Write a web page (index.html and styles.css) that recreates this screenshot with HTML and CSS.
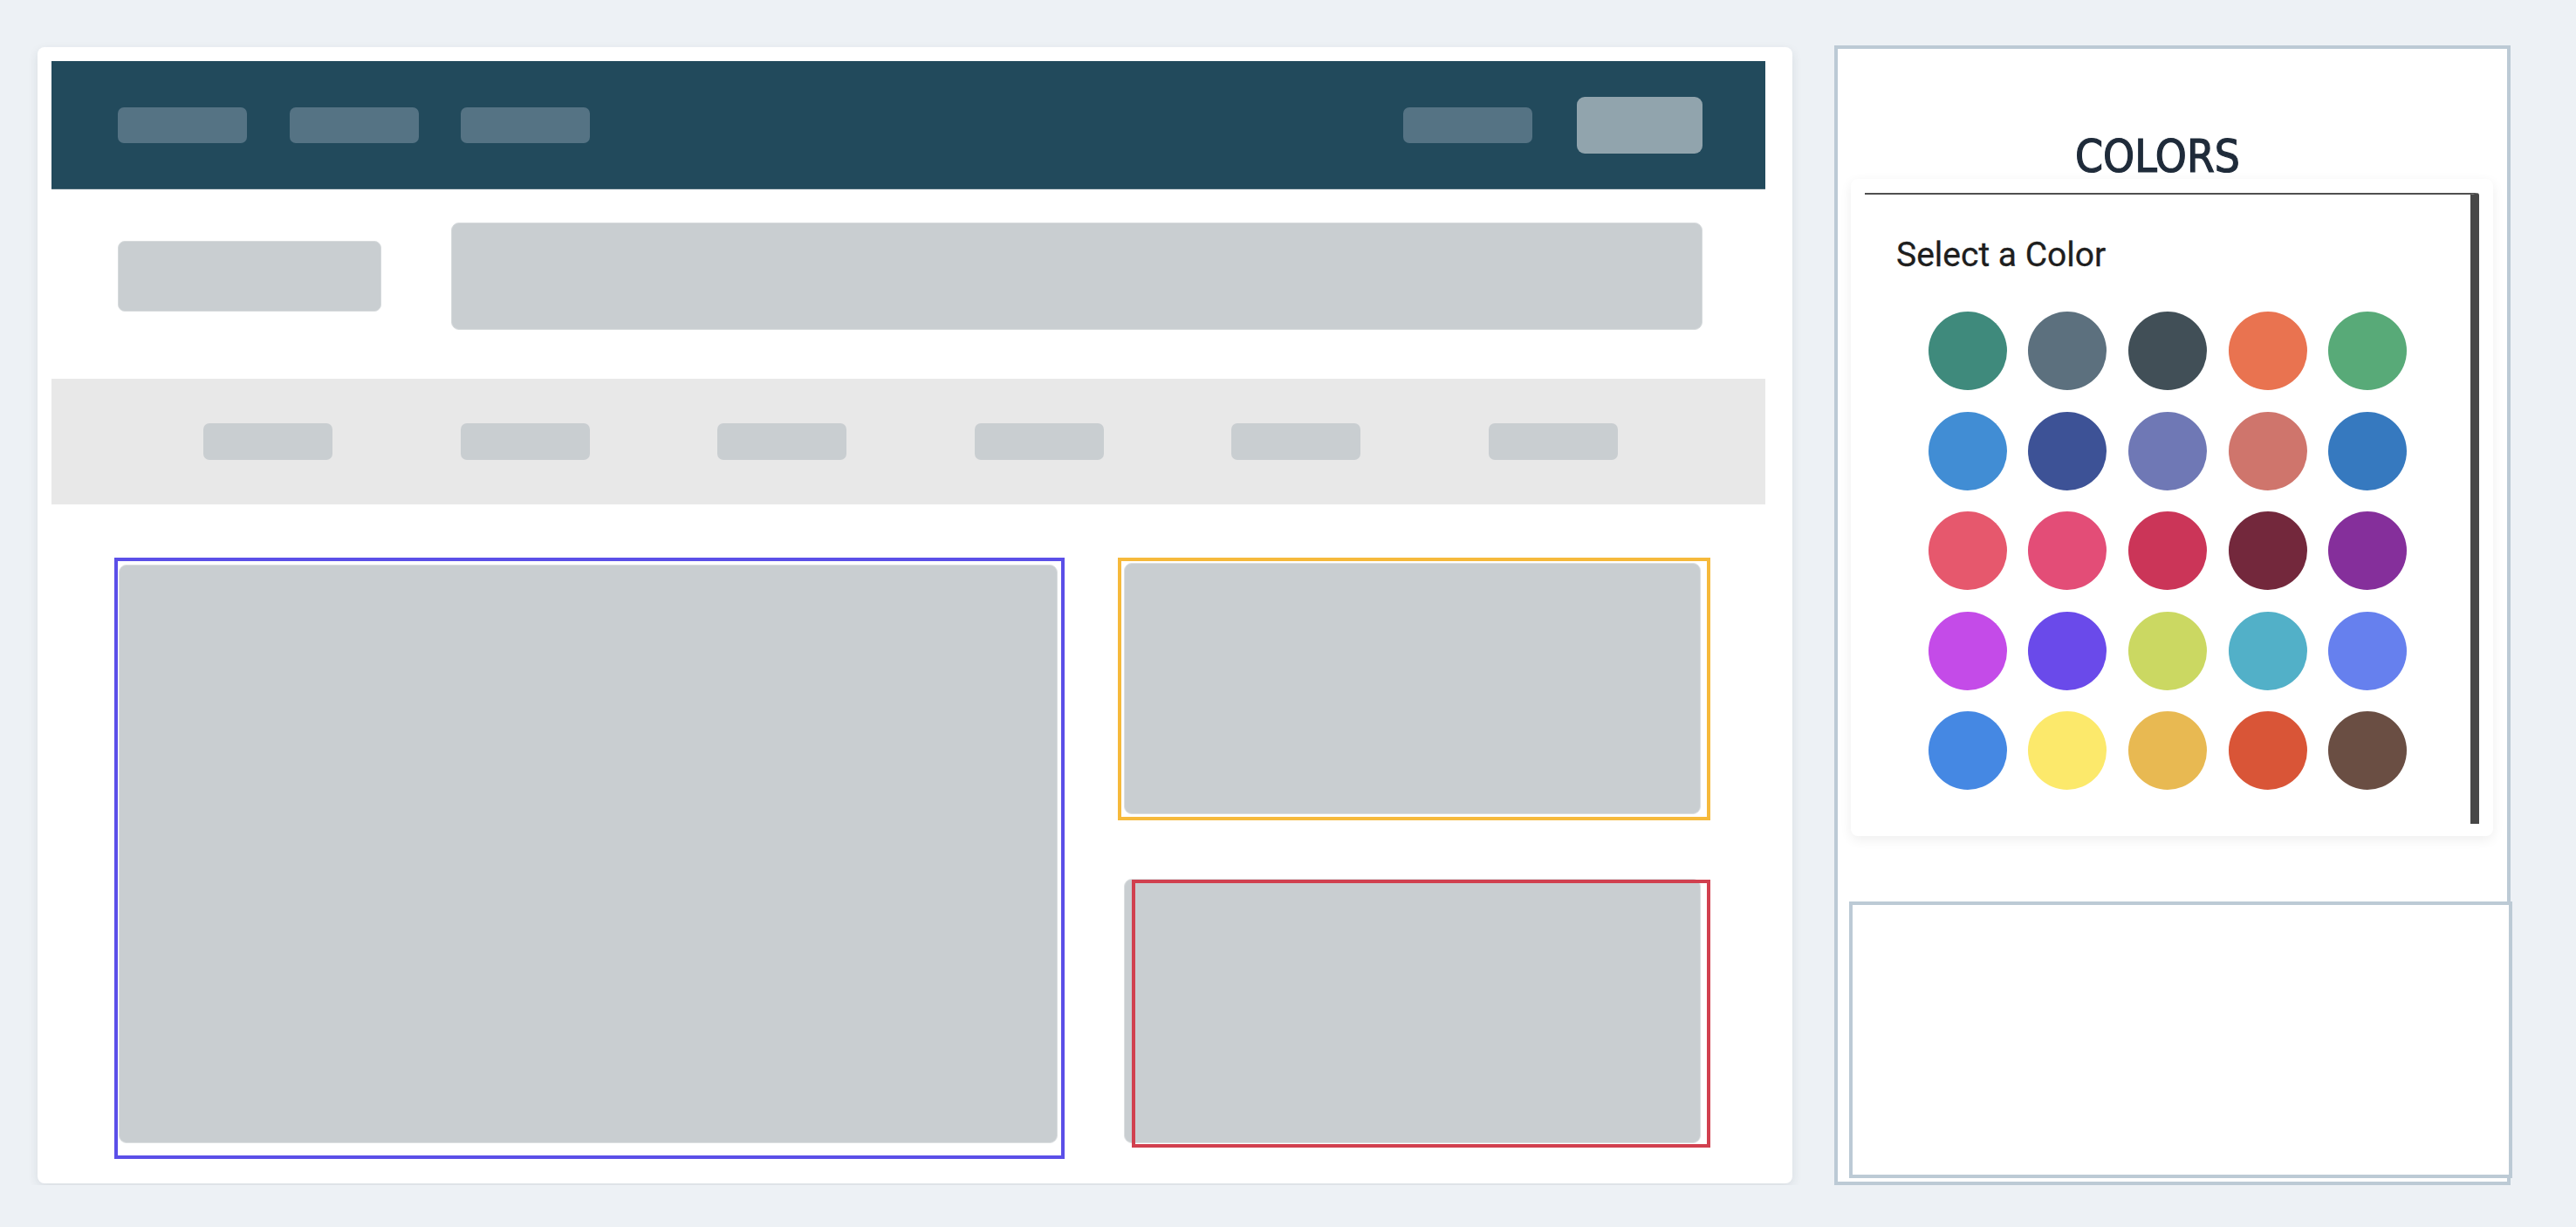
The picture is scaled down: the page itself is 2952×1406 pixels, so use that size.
FILE: index.html
```html
<!DOCTYPE html>
<html lang="en">
<head>
<meta charset="utf-8">
<title>Colors</title>
<link rel="stylesheet" href="styles.css">
</head>
<body>
<div class="page">
  <div class="mock">
    <div class="nav">
      <div class="nav-group nav-left">
        <span class="nav-pill"></span>
        <span class="nav-pill"></span>
        <span class="nav-pill"></span>
      </div>
      <div class="nav-group nav-right">
        <span class="nav-pill"></span>
        <span class="nav-btn"></span>
      </div>
    </div>
    <div class="header">
      <div class="logo"></div>
      <div class="search"></div>
    </div>
    <div class="band">
      <span class="band-pill"></span>
      <span class="band-pill"></span>
      <span class="band-pill"></span>
      <span class="band-pill"></span>
      <span class="band-pill"></span>
      <span class="band-pill"></span>
    </div>
    <div class="content">
      <div class="slot slot-main frame-blue"><div class="block"></div></div>
      <div class="side">
        <div class="slot slot-top frame-yellow"><div class="block"></div></div>
        <div class="slot slot-bottom frame-red"><div class="block"></div></div>
      </div>
    </div>
  </div>

  <aside class="panel">
    <h2 class="panel-title">COLORS</h2>
    <div class="picker-card">
      <div class="picker">
        <p class="picker-label">Select a Color</p>
        <div class="swatches">
          <span class="swatch c1"></span>
          <span class="swatch c2"></span>
          <span class="swatch c3"></span>
          <span class="swatch c4"></span>
          <span class="swatch c5"></span>
          <span class="swatch c6"></span>
          <span class="swatch c7"></span>
          <span class="swatch c8"></span>
          <span class="swatch c9"></span>
          <span class="swatch c10"></span>
          <span class="swatch c11"></span>
          <span class="swatch c12"></span>
          <span class="swatch c13"></span>
          <span class="swatch c14"></span>
          <span class="swatch c15"></span>
          <span class="swatch c16"></span>
          <span class="swatch c17"></span>
          <span class="swatch c18"></span>
          <span class="swatch c19"></span>
          <span class="swatch c20"></span>
          <span class="swatch c21"></span>
          <span class="swatch c22"></span>
          <span class="swatch c23"></span>
          <span class="swatch c24"></span>
          <span class="swatch c25"></span>
        </div>
      </div>
    </div>
    <div class="preview"></div>
  </aside>
</div>
</body>
</html>
```

FILE: styles.css
```css
* { box-sizing: border-box; }

html, body {
  margin: 0;
  padding: 0;
  background: #edf1f5;
  font-family: Roboto, "Liberation Sans", sans-serif;
}

.page {
  display: flex;
  align-items: flex-start;
  gap: 48px;
  padding: 52px 0 0 43px;
}

/* ---------- left mock card ---------- */
.mock {
  margin-top: 2px;
  width: 2011px;
  padding: 16px 31px 46px 16px;
  background: #ffffff;
  border-radius: 8px;
  box-shadow: 0 4px 12px rgba(30, 45, 60, 0.10);
}

.nav {
  width: 1964px;
  height: 147px;
  background: #224a5c;
  border-bottom: 1px solid #4c6a78;
  padding: 0 72px 0 76px;
  display: flex;
  align-items: center;
  justify-content: space-between;
}

.nav-group {
  display: flex;
  align-items: center;
}
.nav-left { gap: 48.5px; }
.nav-right { gap: 51px; }

.nav-pill {
  display: block;
  width: 148px;
  height: 41px;
  border-radius: 7px;
  background: #557384;
}

.nav-btn {
  display: block;
  width: 144px;
  height: 65px;
  border-radius: 9px;
  background: #91a4ad;
}

.header {
  height: 217px;
  padding: 38px 0 0 76px;
  display: flex;
  align-items: flex-start;
  gap: 80px;
}

.logo {
  margin-top: 21px;
  width: 302px;
  height: 81px;
  border-radius: 8px;
  background: #c9ced1;
  border: 1px solid #d6dadc;
}

.search {
  width: 1434px;
  height: 123px;
  border-radius: 9px;
  background: #c9ced1;
  border: 1px solid #d6dadc;
}

.band {
  width: 1964px;
  height: 144px;
  background: #e8e8e8;
  display: flex;
  align-items: center;
  gap: 146.6px;
  padding-left: 174px;
}

.band-pill {
  display: block;
  width: 148px;
  height: 42px;
  border-radius: 7px;
  background: #c9ced1;
}

.content {
  padding: 67px 0 0 77px;
  display: grid;
  grid-template-columns: 1076px 661px;
  column-gap: 76px;
}

.side {
  display: flex;
  flex-direction: column;
  gap: 74px;
}

.slot { position: relative; }
.slot-main { margin-top: 2px; height: 663px; }
.slot-top { height: 288px; }
.slot-bottom { height: 303px; }

.block {
  width: 100%;
  height: 100%;
  border-radius: 9px;
  background: #c9ced1;
  border: 1px solid #dcdfe1;
}

.slot::after {
  content: "";
  position: absolute;
  border-width: 4px;
  border-style: solid;
  pointer-events: none;
}

.frame-blue::after {
  left: -5px; top: -8px; right: -8px; bottom: -18px;
  border-color: #5b4fe8;
}
.frame-yellow::after {
  left: -7px; top: -6px; right: -11px; bottom: -7px;
  border-color: #f6b93b;
}
.frame-red::after {
  left: 9px; top: 1px; right: -11px; bottom: -5px;
  border-color: #d1404f;
}

/* ---------- right panel ---------- */
.panel {
  width: 775px;
  height: 1306px;
  background: #ffffff;
  border: 4px solid #bccad5;
  padding-top: 98px;
}

.panel-title {
  margin: 0;
  padding-right: 34px;
  text-align: center;
  font-family: "DejaVu Sans Condensed", "DejaVu Sans", sans-serif;
  font-stretch: condensed;
  font-weight: normal;
  font-size: 51px;
  line-height: 51px;
  color: #1f2b3a;
  -webkit-text-stroke: 1.2px #1f2b3a;
}

.picker-card {
  margin: 0 16px 0 15px;
  padding: 16px 16px 14px 16px;
  background: #ffffff;
  border-radius: 8px;
  box-shadow: 0 4px 14px rgba(0, 0, 0, 0.07);
}

.picker {
  height: 723px;
  border-top: 2px solid #505050;
  border-right: 10px solid #474747;
  border-top-right-radius: 3px;
  padding-top: 46px;
}

.picker-label {
  margin: 0 0 0 36px;
  font-family: Roboto, sans-serif;
  font-size: 39px;
  line-height: 46px;
  color: #1e1e1e;
  -webkit-text-stroke: 0.3px #1e1e1e;
}

.swatches {
  margin-top: 42px;
  display: grid;
  grid-template-columns: repeat(5, 90px);
  grid-auto-rows: 90px;
  gap: 24.6px;
  justify-content: center;
}

.swatch {
  display: block;
  width: 90px;
  height: 90px;
  border-radius: 50%;
}

.c1 { background: #3f8a7c; }
.c2 { background: #5c707e; }
.c3 { background: #414f57; }
.c4 { background: #e97350; }
.c5 { background: #58aa78; }
.c6 { background: #418dd4; }
.c7 { background: #3d5296; }
.c8 { background: #6f78b5; }
.c9 { background: #cf756c; }
.c10 { background: #3679bf; }
.c11 { background: #e6586d; }
.c12 { background: #e34d77; }
.c13 { background: #cb3558; }
.c14 { background: #73283c; }
.c15 { background: #852f9b; }
.c16 { background: #c44be8; }
.c17 { background: #6a4aea; }
.c18 { background: #cbd862; }
.c19 { background: #52b0c8; }
.c20 { background: #6680ee; }
.c21 { background: #4588e3; }
.c22 { background: #fce96b; }
.c23 { background: #e8b952; }
.c24 { background: #d95537; }
.c25 { background: #6a4e43; }

.preview {
  margin: 75px 0 4px 13px;
  width: 760px;
  height: 317px;
  border: 4px solid #bccad5;
  background: #ffffff;
}
```
